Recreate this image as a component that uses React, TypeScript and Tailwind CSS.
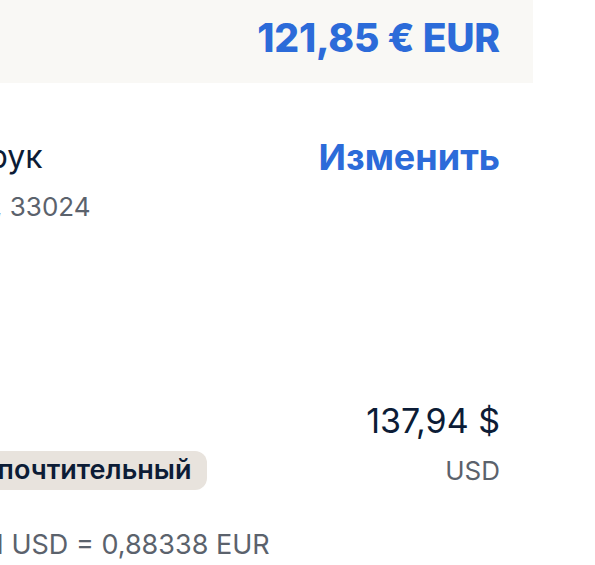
export default function App() {
  return (
    <div className="w-[595px] h-[565px] overflow-hidden bg-white font-['Inter',sans-serif]">
      <div className="w-[663px] -ml-[130px]">
        {/* total */}
        <div className="h-[83px] bg-[#f9f8f5] flex items-center justify-end pr-[33px] pb-[8px]">
          <span className="text-[39px] font-extrabold text-[#2c6bd9] leading-none tracking-[-0.2px]">
            121,85 € EUR
          </span>
        </div>

        <div className="pr-[33px] pt-[56px] whitespace-nowrap">
          <div className="flex justify-between items-center h-[36px]">
            <span className="text-[32px] text-[#0c1c36] leading-none">Ив. Петрук</span>
            <button className="text-[36px] font-bold text-[#2c6bd9] leading-none">Изменить</button>
          </div>
          <div className="mt-[16px] h-[32px] flex items-center">
            <span className="-ml-[3px] text-[26px] text-[#5b626c] leading-none">г. Майами, 33024</span>
          </div>

          <div className="mt-[179px] h-[38px] flex justify-end items-center">
            <span className="text-[34px] text-[#0c1c36] leading-none">137,94 $</span>
          </div>
          <div className="mt-[11px] flex justify-between items-center">
            <span className="ml-[41px] h-[39px] px-4 rounded-xl bg-[#e8e3dd] flex items-center text-[27px] font-semibold text-[#0c1c36]">
              Предпочтительный
            </span>
            <span className="text-[26px] text-[#5b626c] leading-none">USD</span>
          </div>
          <div className="mt-[38px] h-[32px] flex items-center">
            <span className="-ml-[5px] text-[27px] text-[#5b626c] leading-none">По курсу 1 USD = 0,88338 EUR</span>
          </div>
        </div>
      </div>
    </div>
  );
}
